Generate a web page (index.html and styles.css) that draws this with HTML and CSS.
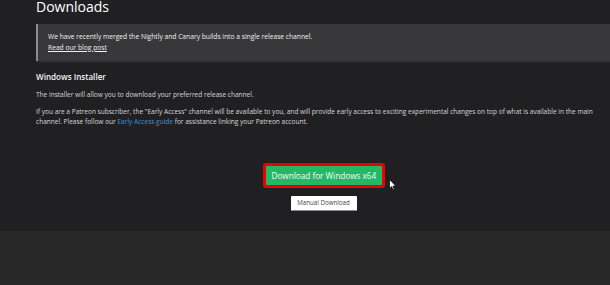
FILE: index.html
```html
<!DOCTYPE html>
<html lang="en">
<head>
  <meta charset="UTF-8">
  <title>Downloads</title>
  <meta name="viewport" content="width=device-width, initial-scale=1.0">
  <link rel="stylesheet" href="styles.css">
</head>
<body>
  <main class="page">
    <h1 class="title">Downloads</h1>

    <div class="callout">
      <p>We have recently merged the Nightly and Canary builds into a single release channel.</p>
      <a href="#" class="callout-link">Read our blog post</a>
    </div>

    <h2 class="section-title">Windows Installer</h2>
    <p class="text">The installer will allow you to download your preferred release channel.</p>
    <p class="text">If you are a Patreon subscriber, the "Early Access" channel will be available to you, and will provide early access to exciting experimental changes on top of what is available in the main<br>channel. Please follow our <a href="#" class="link">Early Access guide</a> for assistance linking your Patreon account.</p>

    <div class="actions">
      <div class="highlight">
        <button class="btn-primary">Download for Windows x64</button>
        <svg class="cursor" width="8" height="12" viewBox="0 0 8 12">
          <path d="M0.5 0.5 L0.5 9.5 L2.6 7.6 L4 10.8 L5.3 10.2 L3.9 7.1 L6.8 7.1 Z" fill="#fff" stroke="#111" stroke-width="0.8"/>
        </svg>
      </div>
      <button class="btn-secondary">Manual Download</button>
    </div>
  </main>
  <footer class="footer"></footer>
</body>
</html>
```

FILE: styles.css
```css
body {
  margin: 0;
  background: #202023;
  font-family: "Open Sans", "Noto Sans", sans-serif;
  overflow: hidden;
}

.page {
  height: 231px;
  box-sizing: border-box;
  padding-left: 36px;
  width: 611px;
}

.title {
  margin: 0;
  font-size: 14px;
  font-weight: 400;
  line-height: 14px;
  color: #fff;
}

.callout {
  margin-top: 10px;
  height: 37px;
  box-sizing: border-box;
  padding: 8px 10px 0;
  background: #38383a;
  border-left: 2px solid #8c8c8e;
  box-shadow: 0 2px 0 #2a2a2d;
  font-size: 6.7px;
  line-height: 10.5px;
  color: #f0f0f0;
  white-space: nowrap;
}

.callout p {
  margin: 0;
}

.callout-link {
  color: #f0f0f0;
  text-decoration: underline;
}

.section-title {
  margin: 10px 0 0;
  font-size: 8.1px;
  font-weight: 600;
  line-height: 12px;
  color: #f2f2f2;
}

.text {
  margin: 7px 0 0;
  font-size: 6.55px;
  line-height: 10.5px;
  color: #d6d6d6;
  white-space: nowrap;
}

.text + .text {
  margin-top: 6px;
}

.link {
  color: #3c91dc;
  text-decoration: none;
}

.actions {
  margin-top: 35px;
  display: flex;
  flex-direction: column;
  align-items: center;
  gap: 8px;
}

.highlight {
  position: relative;
  border: 3px solid #ee0000;
  border-radius: 3px;
  background: #ee0000;
}

.btn-primary {
  display: block;
  border: none;
  margin: 0;
  padding: 0 6px;
  height: 19px;
  width: 116px;
  background: #22b866;
  color: #f4fff8;
  font-family: inherit;
  font-size: 8.2px;
  white-space: nowrap;
  border-radius: 1px;
}

.cursor {
  position: absolute;
  left: 123px;
  top: 13px;
}

.btn-secondary {
  border: none;
  border-bottom: 1px solid #8a8a8a;
  margin: 0;
  height: 15px;
  width: 66px;
  padding: 0;
  background: #fff;
  color: #444;
  font-family: inherit;
  font-size: 6.2px;
  white-space: nowrap;
  border-radius: 1px;
}

.footer {
  height: 54px;
  background: #282828;
}
```
